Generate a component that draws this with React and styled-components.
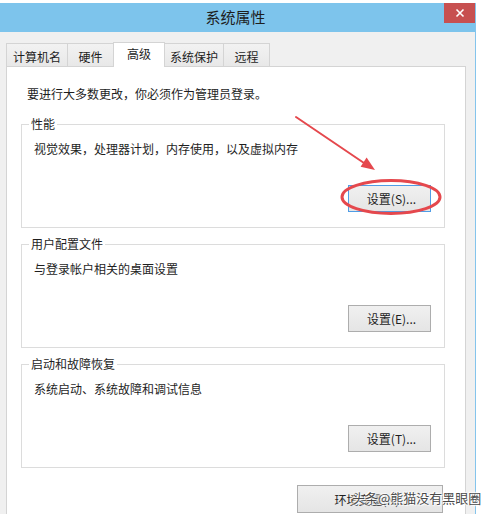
import React from "react";
import styled, { createGlobalStyle } from "styled-components";

const Global = createGlobalStyle`
  html, body { margin: 0; padding: 0; background: #ffffff; }
  body { font-family: "Noto Sans CJK SC", "Noto Sans", sans-serif; }
  #root { width: 491px; height: 514px; overflow: hidden; position: relative; }
`;

const Page = styled.div`
  position: relative;
  width: 491px;
  height: 514px;
  padding-top: 3px;
  box-sizing: border-box;
  background: #ffffff;
  overflow: hidden;
`;

const Window = styled.div`
  width: 476px;
  height: 511px;
  box-sizing: border-box;
  background: #f0f0f0;
  border-right: 1px solid #84c4ec;
  overflow: hidden;
  display: flex;
  flex-direction: column;
`;

const TitleBar = styled.div`
  height: 29px;
  flex: none;
  background: #7dc4ec;
  display: flex;
  align-items: center;
  justify-content: center;
  position: relative;
`;

const Title = styled.div`
  font-size: 15px;
  color: #1e1e1e;
  line-height: 20px;
  margin-left: -4px;
  margin-top: -1px;
`;

const CloseButton = styled.div`
  position: absolute;
  right: 0;
  top: 0;
  width: 31px;
  height: 20px;
  background: #c75050;
  display: flex;
  align-items: center;
  justify-content: center;
`;

const Body = styled.div`
  padding-top: 10px;
  display: flex;
  flex-direction: column;
`;

const TabRow = styled.div`
  display: flex;
  align-items: flex-end;
  padding-left: 6px;
  height: 24px;
  position: relative;
  z-index: 2;
`;

const Tab = styled.div`
  box-sizing: border-box;
  width: ${(p) => p.$w}px;
  height: ${(p) => (p.$active ? 25 : 23)}px;
  margin-bottom: ${(p) => (p.$active ? -1 : 0)}px;
  margin-left: ${(p) => (p.$first ? 0 : -1)}px;
  padding-top: ${(p) => (p.$active ? 2 : 4)}px;
  border: 1px solid #d4d4d4;
  border-bottom: none;
  background: ${(p) => (p.$active ? "#ffffff" : "linear-gradient(#f2f2f2, #e8e8e8)")};
  font-size: 12px;
  line-height: 18px;
  color: #1e1e1e;
  text-align: center;
  white-space: nowrap;
  position: relative;
  z-index: ${(p) => (p.$active ? 2 : 1)};
`;

const Panel = styled.div`
  margin-left: 6px;
  width: 460px;
  box-sizing: border-box;
  background: #ffffff;
  border: 1px solid #d4d4d4;
  border-bottom: none;
  padding: 18px 20px 40px 14px;
  flex: 1;
  position: relative;
  z-index: 1;
`;

const Intro = styled.div`
  font-size: 12px;
  line-height: 18px;
  color: #1e1e1e;
  padding-left: 6px;
  margin-bottom: 21px;
`;

const Group = styled.div`
  position: relative;
  box-sizing: border-box;
  border: 1px solid #dcdcdc;
  padding: 15px 13px 15px 12px;
  display: flex;
  flex-direction: column;
  margin-bottom: ${(p) => (p.$last ? 17 : 16)}px;
`;

const Legend = styled.span`
  position: absolute;
  left: 7px;
  top: -9px;
  padding: 0 2px;
  background: #ffffff;
  font-size: 12px;
  line-height: 16px;
  color: #1e1e1e;
`;

const Desc = styled.div`
  font-size: 12px;
  line-height: 18px;
  color: #1e1e1e;
`;

const Button = styled.div`
  box-sizing: border-box;
  width: ${(p) => p.$w || 83}px;
  height: ${(p) => p.$h || 27}px;
  align-self: flex-end;
  margin-top: ${(p) => (p.$mt ?? 27)}px;
  border: 1px solid ${(p) => (p.$default ? "#4f9de6" : "#adadad")};
  background: linear-gradient(#f0f0f0, #e5e5e5);
  font-size: 12px;
  color: #1e1e1e;
  display: flex;
  align-items: center;
  justify-content: center;
  padding-left: 4px;
  white-space: nowrap;
`;

const BottomRow = styled.div`
  display: flex;
  justify-content: flex-end;
  padding-right: 2px;
`;

const Annotation = styled.svg`
  position: absolute;
  left: 0;
  top: 0;
  pointer-events: none;
  z-index: 5;
`;

const Watermark = styled.div`
  position: absolute;
  left: 352px;
  top: 488px;
  font-size: 13px;
  line-height: 20px;
  color: #4a4a4a;
  white-space: nowrap;
  text-shadow: 0 0 2px #fff, 0 0 2px #fff, 1px 1px 1px #fff, -1px -1px 1px #fff;
  z-index: 6;
  pointer-events: none;
`;

const tabs = [
  { label: "计算机名", w: 62 },
  { label: "硬件", w: 47 },
  { label: "高级", w: 52, active: true },
  { label: "系统保护", w: 60 },
  { label: "远程", w: 47 },
];

const groups = [
  { legend: "性能", desc: "视觉效果，处理器计划，内存使用，以及虚拟内存", btn: "设置(S)...", def: true },
  { legend: "用户配置文件", desc: "与登录帐户相关的桌面设置", btn: "设置(E)..." },
  { legend: "启动和故障恢复", desc: "系统启动、系统故障和调试信息", btn: "设置(T)...", last: true },
];

export default function App() {
  return (
    <>
      <Global />
      <Page>
        <Window>
          <TitleBar>
            <Title>系统属性</Title>
            <CloseButton>
              <svg width="10" height="10" viewBox="0 0 10 10">
                <path d="M1.5 1.5 L8.5 8.5 M8.5 1.5 L1.5 8.5" stroke="#fff" strokeWidth="1.6" />
              </svg>
            </CloseButton>
          </TitleBar>
          <Body>
            <TabRow>
              {tabs.map((t, i) => (
                <Tab key={t.label} $w={t.w} $active={t.active} $first={i === 0}>
                  {t.label}
                </Tab>
              ))}
            </TabRow>
            <Panel>
              <Intro>要进行大多数更改，你必须作为管理员登录。</Intro>
              {groups.map((g) => (
                <Group key={g.legend} $last={g.last}>
                  <Legend>{g.legend}</Legend>
                  <Desc>{g.desc}</Desc>
                  <Button $default={g.def}>{g.btn}</Button>
                </Group>
              ))}
              <BottomRow>
                <Button $w={146} $h={28} $mt={0}>环境变量(N)...</Button>
              </BottomRow>
            </Panel>
          </Body>
        </Window>
        <Annotation width="491" height="514" viewBox="0 0 491 514">
          <ellipse cx="391" cy="197" rx="49" ry="16.5" fill="none" stroke="#e5484d" strokeWidth="3" />
          <line x1="296" y1="117" x2="364" y2="163" stroke="#e5484d" strokeWidth="2" strokeLinecap="round" />
          <polygon points="375,170 360.6,166.8 366.6,157.6" fill="#e5484d" />
        </Annotation>
        <Watermark>头条@熊猫没有黑眼圈</Watermark>
      </Page>
    </>
  );
}
